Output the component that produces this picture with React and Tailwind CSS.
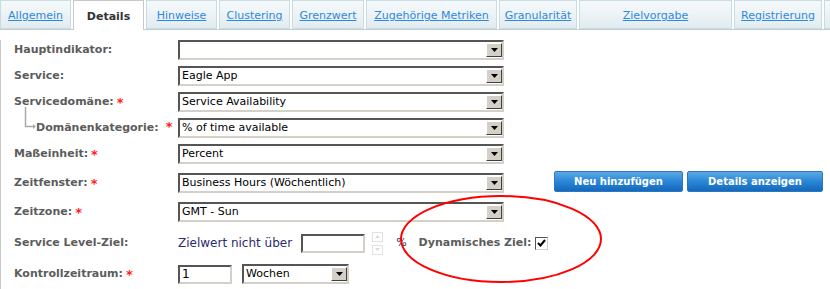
import React from 'react';

const font = { fontFamily: '"DejaVu Sans", Verdana, sans-serif' };

const tabs = [
  { label: 'Allgemein', w: 'w-[71px]' },
  { label: 'Details', w: 'w-[71px]', active: true },
  { label: 'Hinweise', w: 'w-[71px]' },
  { label: 'Clustering', w: 'w-[71px]' },
  { label: 'Grenzwert', w: 'w-[72px]' },
  { label: 'Zugehörige Metriken', w: 'w-[131px]' },
  { label: 'Granularität', w: 'w-[78px]' },
  { label: 'Zielvorgabe', w: 'w-[153px]' },
  { label: 'Registrierung', w: 'w-[88px]' },
  { label: '', w: 'w-[20px]' },
];

function Star() {
  return <span className="ml-[3px] text-[13px] leading-none font-bold text-[#ff2020]">*</span>;
}

function Arrow() {
  return (
    <div className="flex h-[14px] w-[16px] shrink-0 items-center justify-center border border-t-white border-l-white border-b-[#404040] border-r-[#404040] bg-[#d4d0c8]">
      <svg width="7" height="4" viewBox="0 0 7 4">
        <path d="M0 0h7L3.5 4z" fill="#000" />
      </svg>
    </div>
  );
}

function Select({ value, w = 'w-[326px]' }) {
  return (
    <div className={`${w} flex h-[20px] items-center justify-between border-2 border-t-[#555] border-l-[#555] border-b-[#d4d0c8] border-r-[#d4d0c8] bg-white pl-[2px] pr-0`}>
      <span className="text-[11px] text-black whitespace-nowrap">{value}</span>
      <Arrow />
    </div>
  );
}

function Label({ children, star }) {
  return (
    <div className="flex w-[177px] shrink-0 items-center pl-[13px] text-[11px] font-bold text-[#5c5c5c]">
      {children}
      {star && <Star />}
    </div>
  );
}

function Row({ className = '', children }) {
  return <div className={`flex items-center ${className}`}>{children}</div>;
}

function BlueButton({ children, w }) {
  return (
    <div className={`${w} flex h-[21px] items-center justify-center rounded-[2px] border border-[#2a78c4] bg-gradient-to-b from-[#5aa9e6] via-[#2a86d6] to-[#1468bb] text-[10px] font-bold text-white`}>
      {children}
    </div>
  );
}

export default function App() {
  return (
    <div className="relative h-[289px] w-[830px] overflow-hidden bg-white" style={font}>
      {/* tabs */}
      <div className="flex h-[30px] gap-[2px] border-b border-[#c3cdd2]">
        {tabs.map((t, i) =>
          t.active ? (
            <div
              key={i}
              className={`${t.w} -mb-px flex shrink-0 items-center justify-center border border-b-0 border-[#c8c8c8] bg-white pt-[3px] text-[11px] font-bold text-[#333]`}
            >
              {t.label}
            </div>
          ) : (
            <div
              key={i}
              className={`${t.w} flex shrink-0 items-center justify-center border border-[#c6dde4] bg-gradient-to-b from-[#f6f9fb] to-[#e2ecf0] pt-[3px] text-[11px] text-[#2b8ae0] underline`}
            >
              {t.label}
            </div>
          )
        )}
      </div>

      {/* body */}
      <div className="h-[259px] border-l border-[#c8c8c8]">
        <Row className="mt-[10px]">
          <Label>Hauptindikator:</Label>
          <Select value="" />
        </Row>
        <Row className="mt-[6px]">
          <Label>Service:</Label>
          <Select value="Eagle App" />
        </Row>
        <Row className="mt-[6px]">
          <Label star>Servicedomäne:</Label>
          <Select value="Service Availability" />
        </Row>
        <Row className="mt-[6px]">
          <div className="relative flex w-[177px] shrink-0 items-center pl-[35px] text-[11px] font-bold text-[#5c5c5c]">
            <svg className="absolute left-[22px] top-[-13px]" width="14" height="24" viewBox="0 0 14 24">
              <path d="M2.5 0v19.5h8" stroke="#aaa" strokeWidth="1.5" fill="none" />
              <path d="M10 17l3 2.5-3 2.5z" fill="#aaa" />
            </svg>
            Domänenkategorie:
            <span className="ml-[4px]">
              <Star />
            </span>
          </div>
          <Select value="% of time available" />
        </Row>
        <Row className="mt-[6px]">
          <Label star>Maßeinheit:</Label>
          <Select value="Percent" />
        </Row>
        <Row className="mt-[9px]">
          <Label star>Zeitfenster:</Label>
          <Select value="Business Hours (Wöchentlich)" />
          <div className="ml-[50px] flex gap-[4px] -mt-[3px]">
            <BlueButton w="w-[129px]">Neu hinzufügen</BlueButton>
            <BlueButton w="w-[136px]">Details anzeigen</BlueButton>
          </div>
        </Row>
        <Row className="mt-[9px]">
          <Label star>Zeitzone:</Label>
          <Select value="GMT - Sun" />
        </Row>
        <Row className="mt-[10px] h-[22px]">
          <Label>Service Level-Ziel:</Label>
          <span className="text-[12px] text-[#2c2a6e]">Zielwert nicht über</span>
          <div className="ml-[9px] h-[19px] w-[64px] border-2 border-t-[#555] border-l-[#555] border-b-[#d4d0c8] border-r-[#d4d0c8] bg-white" />
          <div className="ml-[7px] flex flex-col gap-[3px]">
            <div className="flex h-[10px] w-[11px] items-center justify-center border border-[#e2e2e2]">
              <svg width="5" height="3" viewBox="0 0 5 3"><path d="M0 3h5L2.5 0z" fill="#d8d8d8" /></svg>
            </div>
            <div className="flex h-[10px] w-[11px] items-center justify-center border border-[#e2e2e2]">
              <svg width="5" height="3" viewBox="0 0 5 3"><path d="M0 0h5L2.5 3z" fill="#d8d8d8" /></svg>
            </div>
          </div>
          <span className="ml-[13px] text-[11px] text-[#2c2a6e]">%</span>
          <span className="ml-[12px] text-[11px] font-bold text-[#5c5c5c]">Dynamisches Ziel:</span>
          <div className="ml-[4px] flex h-[13px] w-[13px] items-center justify-center border border-t-[#555] border-l-[#555] border-b-[#d4d0c8] border-r-[#d4d0c8] bg-white">
            <svg width="9" height="8" viewBox="0 0 9 8">
              <path d="M1 4l2.5 2.5L8 1" stroke="#000" strokeWidth="2" fill="none" />
            </svg>
          </div>
        </Row>
        <Row className="mt-[10px]">
          <Label star>Kontrollzeitraum:</Label>
          <div className="flex h-[19px] w-[54px] items-center border-2 border-t-[#555] border-l-[#555] border-b-[#d4d0c8] border-r-[#d4d0c8] bg-white pl-[2px] text-[12px]">
            1
          </div>
          <div className="ml-[10px]">
            <Select value="Wochen" w="w-[107px]" />
          </div>
        </Row>
      </div>

      {/* annotation */}
      <svg className="pointer-events-none absolute left-0 top-0" width="830" height="289">
        <ellipse cx="501" cy="239" rx="100" ry="43" stroke="#f00" strokeWidth="2" fill="none" />
      </svg>
    </div>
  );
}
